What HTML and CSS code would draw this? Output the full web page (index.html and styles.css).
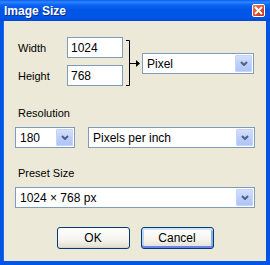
FILE: index.html
```html
<!DOCTYPE html>
<html lang="en">
<head>
    <meta charset="UTF-8">
    <title>Image Size</title>
    <link rel="stylesheet" href="styles.css">
</head>
<body>
    <div class="window">
        <div class="titlebar">
            <span class="title">Image Size</span>
            <span class="close">
                <svg width="9" height="9" viewBox="0 0 9 9"><path d="M1 1 L8 8 M8 1 L1 8" stroke="#fff" stroke-width="2" fill="none"/></svg>
            </span>
        </div>

        <div class="content">
            <div class="size-group">
                <div class="fields">
                    <div class="field">
                        <label>Width</label>
                        <div class="edit">1024</div>
                    </div>
                    <div class="field">
                        <label>Height</label>
                        <div class="edit">768</div>
                    </div>
                </div>
                <svg class="bracket" width="19" height="50" viewBox="0 0 19 50">
                    <path d="M3 3.5 H6.5 V48.5 H3" stroke="#000" fill="none"/>
                    <path d="M7 26.5 H14" stroke="#000" fill="none"/>
                    <path d="M13 23 L17 26.5 L13 30 Z" fill="#000"/>
                </svg>
                <div class="combo unit">
                    <span class="value">Pixel</span>
                    <span class="drop"><svg width="8" height="5" viewBox="0 0 8 5"><path d="M1 1 L4 4 L7 1" stroke="#4D6185" stroke-width="2" fill="none"/></svg></span>
                </div>
            </div>

            <div class="caption res-caption">Resolution</div>
            <div class="row">
                <div class="combo res-value">
                    <span class="value">180</span>
                    <span class="drop"><svg width="8" height="5" viewBox="0 0 8 5"><path d="M1 1 L4 4 L7 1" stroke="#4D6185" stroke-width="2" fill="none"/></svg></span>
                </div>
                <div class="combo res-unit">
                    <span class="value">Pixels per inch</span>
                    <span class="drop"><svg width="8" height="5" viewBox="0 0 8 5"><path d="M1 1 L4 4 L7 1" stroke="#4D6185" stroke-width="2" fill="none"/></svg></span>
                </div>
            </div>

            <div class="caption preset-caption">Preset Size</div>
            <div class="combo preset">
                <span class="value">1024 × 768 px</span>
                <span class="drop"><svg width="8" height="5" viewBox="0 0 8 5"><path d="M1 1 L4 4 L7 1" stroke="#4D6185" stroke-width="2" fill="none"/></svg></span>
            </div>

            <div class="buttons">
                <button class="xp-btn">OK</button>
                <button class="xp-btn default">Cancel</button>
            </div>
        </div>
    </div>
</body>
</html>
```

FILE: styles.css
```css
body { margin: 0; font-family: "Liberation Sans", Tahoma, Arial, sans-serif; font-size: 11px; color: #000; }
.window { width: 270px; height: 265px; display: flex; flex-direction: column; background: #0055E5; box-sizing: border-box; }
.titlebar { height: 21px; display: flex; align-items: center; justify-content: space-between; padding: 0 5px 0 4px; background: linear-gradient(#0A5FEF 0, #2E86FF 2px, #0B63F4 5px, #0055E5 10px, #0056EA 17px, #0049D6 21px); }
.title { color: #fff; font-weight: bold; font-size: 12px; text-shadow: 1px 1px #0A2E8C; }
.close { width: 13px; height: 13px; box-sizing: border-box; border: 1px solid #fff; border-radius: 2px; background: linear-gradient(135deg, #E8876C, #D9461F 60%, #C13A15); display: flex; align-items: center; justify-content: center; }

.content { flex: 1; margin: 0 4px 4px 3px; background: #ECE9D8; padding: 16px 11px 0 12px; box-shadow: inset 1px 0 #166AEE; }

.size-group { display: flex; align-items: flex-start; }
.fields { display: flex; flex-direction: column; gap: 7px; }
.field { display: flex; align-items: center; }
.field label { width: 49px; padding-left: 3px; }
.edit { width: 56px; height: 21px; box-sizing: border-box; border: 1px solid #7F9DB9; background: #fff; padding: 0 3px; display: flex; align-items: center; font-size: 12px; }
.bracket { display: block; margin-top: 0; }
.combo { height: 21px; box-sizing: border-box; border: 1px solid #7F9DB9; background: #fff; padding: 1px; display: flex; align-items: center; font-size: 12px; }
.combo .value { flex: 1; padding-left: 3px; }
.combo .drop { width: 17px; height: 17px; box-sizing: border-box; border: 1px solid #C3D3FD; border-radius: 1px; background: linear-gradient(#D3E0FD, #BACCF8 60%, #B1C5F7); display: flex; align-items: center; justify-content: center; }
.unit { width: 112px; margin-top: 16px; }

.caption { padding-left: 3px; line-height: 13px; }
.res-caption { margin-top: 20px; }
.row { display: flex; gap: 13px; margin-top: 7px; }
.res-value { width: 60px; }
.res-unit { flex: 1; }
.preset-caption { margin-top: 19px; }
.preset { margin-top: 7px; }

.buttons { display: flex; justify-content: center; gap: 11px; margin-top: 19px; }
.xp-btn { width: 73px; height: 22px; border: 1px solid #003C74; border-radius: 3px; background: linear-gradient(#FFFFFF, #F4F3EE 60%, #E6E3D6 90%, #D6D0C5); font-family: inherit; font-size: 12px; color: #000; padding: 0; }
.xp-btn.default { box-shadow: inset 0 2px #CEE7FF, inset 0 -2px #6982EE, inset 2px 0 #BCD4F6, inset -2px 0 #89ADE4; }
```
